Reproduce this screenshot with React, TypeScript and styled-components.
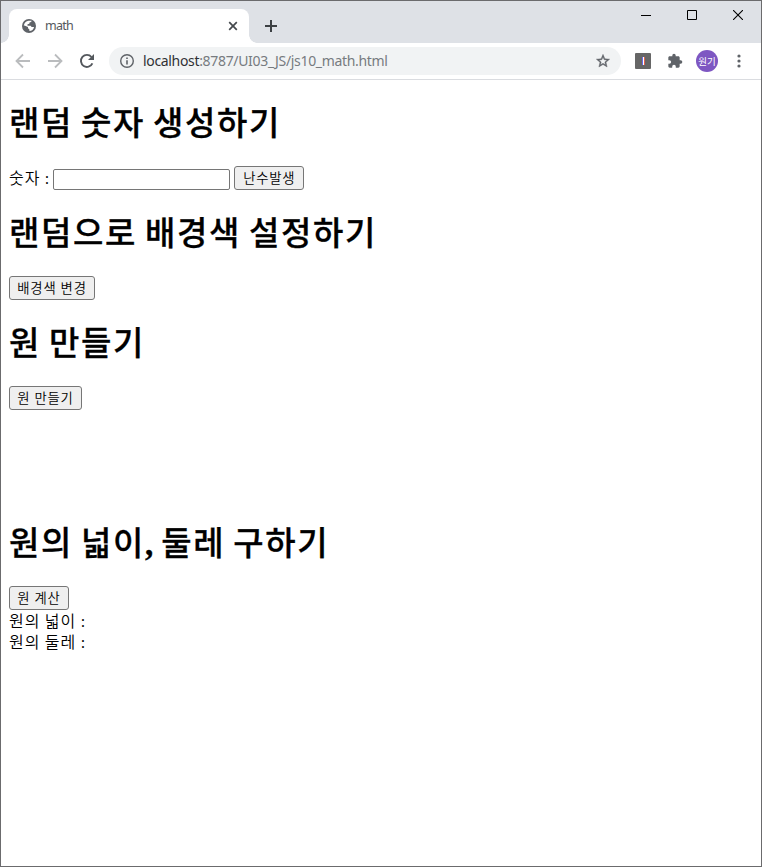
import React from "react";
import styled, { createGlobalStyle } from "styled-components";

const GlobalStyle = createGlobalStyle`
  * { box-sizing: border-box; }
  body { margin: 0; background: #fff; }
`;

const Window = styled.div`
  width: 762px;
  height: 867px;
  border: 1px solid #6b6b6d;
  background: #fff;
  display: flex;
  flex-direction: column;
  overflow: hidden;
`;

const TabStrip = styled.div`
  height: 42px;
  flex: none;
  background: #dee1e6;
  display: flex;
  align-items: flex-end;
`;

const Tab = styled.div`
  width: 240px;
  height: 34px;
  margin-left: 8px;
  padding: 0 10px 0 12px;
  background: #fff;
  border-radius: 8px 8px 0 0;
  display: flex;
  align-items: center;
  position: relative;
  &::before,
  &::after {
    content: "";
    position: absolute;
    bottom: 0;
    width: 8px;
    height: 8px;
  }
  &::before {
    left: -8px;
    background: radial-gradient(circle at 0 0, transparent 7.5px, #fff 8px);
  }
  &::after {
    right: -8px;
    background: radial-gradient(circle at 100% 0, transparent 7.5px, #fff 8px);
  }
`;

const TabTitle = styled.span`
  flex: 1;
  margin-left: 8px;
  font: 12.5px/16px "Noto Sans", "Noto Sans CJK KR", sans-serif;
  letter-spacing: -0.75px;
  color: #54585d;
`;

const Icon = styled.svg`
  display: block;
  flex: none;
`;

const NewTab = styled.div`
  margin: 0 0 10px 15px;
`;

const Captions = styled.div`
  margin-left: auto;
  align-self: flex-start;
  display: flex;
`;

const Caption = styled.div`
  width: 46px;
  height: 28px;
  display: flex;
  align-items: center;
  justify-content: center;
`;

const Toolbar = styled.div`
  height: 37px;
  flex: none;
  border-bottom: 1px solid #dadce0;
  display: flex;
  align-items: center;
  padding-left: 14px;
`;

const NavIcons = styled.div`
  display: flex;
  gap: 16px;
`;

const AddressBar = styled.div`
  width: 512px;
  height: 28px;
  margin-left: 14px;
  padding: 0 10px;
  border-radius: 14px;
  background: #f1f3f4;
  display: flex;
  align-items: center;
`;

const Url = styled.span`
  flex: 1;
  margin-left: 8px;
  font: 14px/20px "Noto Sans", sans-serif;
  letter-spacing: -0.33px;
  color: #777b80;
  white-space: nowrap;
`;

const Host = styled.span`
  color: #303134;
`;

const Extension = styled.div`
  width: 16px;
  height: 16px;
  margin: 0 16px 0 14px;
  border-radius: 1px;
  background: #666;
  display: flex;
  align-items: center;
  justify-content: center;
`;

const ExtensionMark = styled.i`
  width: 3px;
  height: 8px;
  background: #fff;
  border-left: 1px solid #6a6ae8;
  border-right: 1px solid #e0604d;
`;

const Avatar = styled.div`
  width: 22px;
  height: 22px;
  margin: 0 13px;
  border-radius: 50%;
  background: #7e57c2;
  color: #fff;
  font: 9.5px/22px "Noto Sans CJK KR", sans-serif;
  text-align: center;
  white-space: nowrap;
`;

const Page = styled.main`
  flex: 1;
  padding: 0 8px;
  color: #000;
  font: 16px/21px "Liberation Serif", "Noto Sans CJK KR", serif;
`;

const Heading = styled.h1`
  margin: 21.5px 0;
  padding-top: 1px;
  font-size: 33px;
  line-height: 42px;
  font-weight: 500;
  letter-spacing: 1.65px;
  word-spacing: -1.9px;
  -webkit-text-stroke: 0.3px #000;
`;

const Comma = styled.span`
  font-weight: 700;
  letter-spacing: 0;
`;

const Row = styled.div`
  height: 24px;
  display: flex;
  align-items: center;
`;

const Text = styled.div`
  height: 21px;
  font-weight: 350;
  letter-spacing: 1px;
  word-spacing: -0.6px;
  white-space: pre;
`;

const Results = styled.div`
  padding-top: 1px;
`;

const NumberInput = styled.input`
  width: 177px;
  height: 21px;
  margin: 2px 4px 0 3px;
  padding: 1px 2px;
  border: 1px solid #767676;
  border-radius: 2px;
  background: #fff;
`;

const Button = styled.button<{ $w: number }>`
  width: ${(p) => p.$w}px;
  height: 24px;
  padding: 2px 0 0;
  border: 1px solid #767676;
  border-radius: 3px;
  background: #efefef;
  color: #000;
  font: 350 13.333px/20px "Liberation Sans", "Noto Sans CJK KR", sans-serif;
  letter-spacing: 0.8px;
  word-spacing: -0.4px;
  white-space: nowrap;
`;

const CircleArea = styled.div`
  height: 90px;
`;

const Globe = () => (
  <Icon width="16" height="16" viewBox="0 0 16 16">
    <circle cx="8" cy="8" r="7" fill="#5f6368" />
    <path d="M7.6 2.7h3.1c-.3 1-.9 1.5-2 1.6L8.3 5.8l-1.8.4v1.5h3.1l1 1.2h2.5c-.4 2.2-2.3 4.1-4.7 4.2v-1.7L7 10.2V9L3.4 7.6l-.6.1C3.2 4.9 5.1 3 7.6 2.7Z" fill="#fff" />
  </Icon>
);

const Arrow = ({ forward = false }: { forward?: boolean }) => (
  <Icon width="16" height="16" viewBox="0 0 16 16">
    <path d={forward ? "M1 8h13M8 1.5 14.5 8 8 14.5" : "M15 8H2M8 1.5 1.5 8 8 14.5"} fill="none" stroke="#babcbe" strokeWidth="1.8" />
  </Icon>
);

export default function App() {
  return (
    <>
      <GlobalStyle />
      <Window>
        <TabStrip>
          <Tab>
            <Globe />
            <TabTitle>math</TabTitle>
            <Icon width="12" height="12" viewBox="0 0 12 12">
              <path d="m2.2 2.2 7.6 7.6m0-7.6-7.6 7.6" stroke="#45494d" strokeWidth="1.7" />
            </Icon>
          </Tab>
          <NewTab>
            <Icon width="14" height="14" viewBox="0 0 14 14">
              <path d="M7 1v12M1 7h12" stroke="#3c4043" strokeWidth="2" />
            </Icon>
          </NewTab>
          <Captions>
            <Caption>
              <Icon width="10" height="10" viewBox="0 0 10 10"><path d="M0 5.5h10" stroke="#000" /></Icon>
            </Caption>
            <Caption>
              <Icon width="10" height="10" viewBox="0 0 10 10"><path d="M.5.5h9v9h-9Z" fill="none" stroke="#000" /></Icon>
            </Caption>
            <Caption>
              <Icon width="10" height="10" viewBox="0 0 10 10"><path d="m0 0 10 10M10 0 0 10" stroke="#000" strokeWidth="1.1" /></Icon>
            </Caption>
          </Captions>
        </TabStrip>
        <Toolbar>
          <NavIcons>
            <Arrow />
            <Arrow forward />
            <Icon width="16" height="16" viewBox="0 0 16 16">
              <path d="M13.4 10.4A6 6 0 1 1 12.5 4" fill="none" stroke="#54585d" strokeWidth="1.9" />
              <path d="M15 1v6H9Z" fill="#54585d" />
            </Icon>
          </NavIcons>
          <AddressBar>
            <Icon width="16" height="16" viewBox="0 0 16 16">
              <circle cx="8" cy="8" r="6.3" fill="none" stroke="#5f6368" strokeWidth="1.4" />
              <path d="M8 7.2v4.2M8 4.5v1.6" stroke="#5f6368" strokeWidth="1.6" />
            </Icon>
            <Url><Host>localhost</Host>:8787/UI03_JS/js10_math.html</Url>
            <Icon width="16" height="16" viewBox="0 0 24 24">
              <path d="m22 9.24-7.19-.62L12 2 9.19 8.63 2 9.24l5.46 4.73L5.82 21 12 17.27 18.18 21l-1.63-7.03L22 9.24ZM12 15.4l-3.76 2.27 1-4.28-3.32-2.88 4.38-.38L12 6.1l1.71 4.04 4.38.38-3.32 2.88 1 4.28L12 15.4Z" fill="#5f6368" stroke="#5f6368" strokeWidth=".6" />
            </Icon>
          </AddressBar>
          <Extension><ExtensionMark /></Extension>
          <Icon width="16" height="16" viewBox="0 0 24 24">
            <path d="M20.5 11H19V7c0-1.1-.9-2-2-2h-4V3.5a2.5 2.5 0 0 0-5 0V5H4c-1.1 0-2 .9-2 2v3.8h1.5a2.7 2.7 0 0 1 0 5.4H2V20c0 1.1.9 2 2 2h3.8v-1.5a2.7 2.7 0 0 1 5.4 0V22H17c1.1 0 2-.9 2-2v-4h1.5a2.5 2.5 0 0 0 0-5Z" fill="#5f6368" />
          </Icon>
          <Avatar>원기</Avatar>
          <Icon width="16" height="16" viewBox="0 0 16 16">
            <g fill="#5f6368"><circle cx="8" cy="3" r="1.6" /><circle cx="8" cy="8" r="1.6" /><circle cx="8" cy="13" r="1.6" /></g>
          </Icon>
        </Toolbar>
        <Page>
          <Heading>랜덤 숫자 생성하기</Heading>
          <Row>
            <Text>숫자 :</Text>
            <NumberInput aria-label="숫자" />
            <Button $w={70}>난수발생</Button>
          </Row>
          <Heading>랜덤으로 배경색 설정하기</Heading>
          <Row><Button $w={86}>배경색 변경</Button></Row>
          <Heading>원 만들기</Heading>
          <Row><Button $w={73}>원 만들기</Button></Row>
          <CircleArea />
          <Heading>원의 넓이<Comma>,</Comma> 둘레 구하기</Heading>
          <Row><Button $w={60}>원 계산</Button></Row>
          <Results>
            <Text>원의 넓이 :</Text>
            <Text>원의 둘레 :</Text>
          </Results>
        </Page>
      </Window>
    </>
  );
}
